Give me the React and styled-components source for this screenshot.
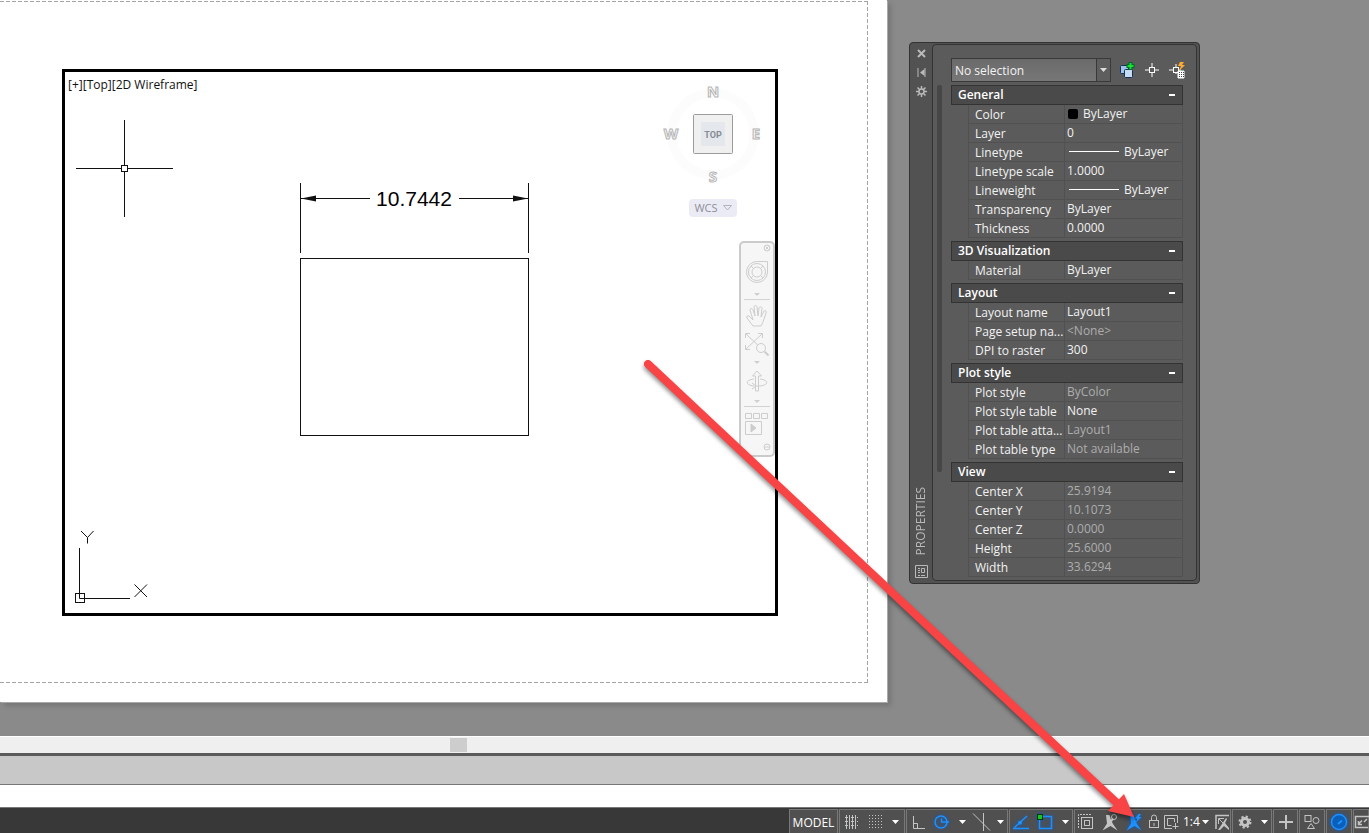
import React, { useState } from 'react';
import styled, { createGlobalStyle } from 'styled-components';

const GlobalStyle = createGlobalStyle`
  * {
    box-sizing: border-box;
  }
  body {
    margin: 0;
    background: #8a8a8a;
    font-family: "Open Sans", "Noto Sans", sans-serif;
    font-size: 12px;
  }
  button, select {
    font: inherit;
    color: inherit;
    margin: 0;
    padding: 0;
    border: none;
    background: none;
    appearance: none;
  }
  svg {
    display: block;
    flex: none;
  }
`;

const Page = styled.div`
  position: relative;
  display: flex;
  flex-direction: column;
  min-height: 100vh;
  overflow: hidden;
`;

/* ---------- workspace ---------- */

const Workspace = styled.main`
  flex: 1;
  display: grid;
  grid-template-columns: 1fr 482px;
  padding-bottom: 34px;
  background: #8a8a8a;
`;

const Sheet = styled.section`
  display: flex;
  padding: 1px 19px 19px 0;
  background: #fff;
  box-shadow: 1px 1px 0 #a8a8a8, 4px 4px 5px rgba(0, 0, 0, 0.15);
`;

const PrintArea = styled.div`
  flex: 1;
  display: flex;
  padding: 68px 90px 67px 62px;
  background:
    repeating-linear-gradient(90deg, #a4a4a4 0 4px, transparent 4px 6px) top / 100% 1px no-repeat,
    repeating-linear-gradient(90deg, #a4a4a4 0 4px, transparent 4px 6px) bottom / 100% 1px no-repeat,
    repeating-linear-gradient(180deg, #a4a4a4 0 4px, transparent 4px 6px) right / 1px 100% no-repeat;
`;

const Viewport = styled.div`
  position: relative;
  flex: 1;
  display: grid;
  grid-template-columns: 1fr 124px;
  border: 3px solid #000;
`;

const Drawing = styled.svg`
  position: absolute;
  top: 0;
  left: 0;
  width: 100%;
  height: 100%;
`;

const ViewportControls = styled.div`
  position: relative;
  display: flex;
  align-items: flex-start;
  padding: 5px 3px;
  line-height: 16px;
  color: #111;
`;

const ViewTools = styled.div`
  position: relative;
  display: flex;
  flex-direction: column;
  align-items: center;
  padding-top: 5px;
`;

const WcsButton = styled.button`
  display: flex;
  align-items: center;
  justify-content: center;
  gap: 5px;
  width: 48px;
  height: 18px;
  margin-top: 12px;
  padding-bottom: 1px;
  border-radius: 4px;
  background: #ebebf5;
  color: #8e8e96;
  font-size: 11px;
`;

const NavBar = styled.nav`
  align-self: flex-end;
  display: flex;
  flex-direction: column;
  width: 36px;
  height: 216px;
  margin-top: 24px;
  border: 2px solid #cbcbcb;
  border-radius: 5px;
  background: #f6f6f6;
  color: #cdcdcd;
`;

const NavButton = styled.button`
  display: flex;
  align-items: center;
  justify-content: center;
  height: ${(p) => p.$height}px;
`;

const NavRule = styled.hr`
  width: 26px;
  height: 1px;
  margin: 0 auto;
  border: none;
  background: #d2d2d2;
`;

/* ---------- properties palette ---------- */

const Palette = styled.aside`
  display: flex;
  width: 291px;
  height: 542px;
  margin: 42px 0 0 22px;
  padding: 1px 2px 2px 1px;
  border: 1px solid #333;
  border-radius: 4px;
  background: #525252;
`;

const PaletteStrip = styled.div`
  flex: none;
  display: flex;
  flex-direction: column;
  align-items: flex-start;
  width: 21px;
  color: #b9b9b9;
`;

const StripButton = styled.button`
  display: flex;
  align-items: center;
  justify-content: center;
  width: 20px;
  height: 19px;
`;

const PaletteTitle = styled.h2`
  width: 20px;
  margin: auto 0 7px;
  font-size: 12px;
  font-weight: 400;
  line-height: 20px;
  writing-mode: vertical-rl;
  transform: rotate(180deg);
`;

const PaletteBody = styled.div`
  flex: 1;
  min-width: 0;
  display: flex;
  align-items: flex-start;
  gap: 9px;
  padding: 13px 13px 0 4px;
  border: 1px solid #333;
  border-radius: 4px;
  background: #5b5b5b;
  color: #f2f2f2;
`;

const ScrollThumb = styled.div`
  flex: none;
  width: 5px;
  height: 387px;
  margin-top: 27px;
  border-radius: 2px;
  background: #464646;
`;

const PaletteContent = styled.div`
  flex: 1;
  min-width: 0;
`;

const SelectionRow = styled.div`
  display: flex;
  align-items: center;
  height: 24px;
  margin-bottom: 3px;
`;

const SelectionBox = styled.label`
  flex: none;
  display: flex;
  align-items: center;
  width: 160px;
  height: 24px;
  margin-right: 3px;
  border: 1px solid #393939;
  background: linear-gradient(#6a6a6a, #777);
`;

const SelectionSelect = styled.select`
  flex: 1;
  height: 22px;
  padding: 0 3px;
  border-right: 1px solid #393939;
`;

const SelectionCaret = styled.span`
  display: flex;
  align-items: center;
  justify-content: center;
  width: 13px;
  height: 22px;
  background: #5e5e5e;
`;

const PickButton = styled.button`
  flex: none;
  display: flex;
  align-items: center;
  justify-content: center;
  width: 25px;
  height: 22px;
`;

const Section = styled.section`
  margin-bottom: 3px;
`;

const SectionHeader = styled.button`
  display: flex;
  align-items: center;
  justify-content: space-between;
  width: 100%;
  height: 20px;
  padding: 0 7px 1px 6px;
  border: 1px solid #333;
  background: #4a4a4a;
  color: #fff;
  font-weight: 600;
`;

const Minus = styled.span`
  width: 6px;
  height: 2px;
  background: #fff;
`;

const PropertyTable = styled.table`
  width: calc(100% - 17px);
  margin-left: 17px;
  border-collapse: separate;
  border-spacing: 0;
  table-layout: fixed;
`;

const NameCell = styled.th`
  width: 96px;
  height: 19px;
  padding: 1px 0 0 6px;
  border-left: 1px solid #515151;
  border-bottom: 1px solid #515151;
  font-weight: 400;
  line-height: 17px;
  text-align: left;
  white-space: nowrap;
`;

const ValueCell = styled.td`
  height: 19px;
  padding: 0 0 1px 2px;
  border-left: 1px solid #515151;
  border-right: 1px solid #515151;
  border-bottom: 1px solid #515151;
  color: ${(p) => (p.$muted ? '#adadad' : '#f2f2f2')};
  line-height: 17px;
  white-space: nowrap;
`;

const ValueContent = styled.span`
  display: flex;
  align-items: center;
  gap: 5px;
`;

const Swatch = styled.span`
  width: 10px;
  height: 10px;
  margin-left: 1px;
  border-radius: 2px;
  background: #000;
`;

const LineSample = styled.span`
  width: 50px;
  height: 1px;
  margin-left: 2px;
  background: #fff;
`;

/* ---------- bottom bars ---------- */

const ScrollTrack = styled.div`
  height: 17px;
  padding: 1px 0 1px 450px;
  border-top: 1px solid #fff;
  background: #efefef;
`;

const TrackThumb = styled.div`
  width: 17px;
  height: 14px;
  background: #cdcdcd;
`;

const CommandHistory = styled.div`
  height: 32px;
  border-top: 3px solid #5a5a5a;
  border-bottom: 1px solid #777;
  background: #c8c8c8;
`;

const CommandLine = styled.div`
  height: 22px;
  background: #fff;
`;

const StatusBar = styled.footer`
  display: flex;
  justify-content: flex-end;
  gap: 1px;
  height: 26px;
  padding-top: 1px;
  border-top: 1px solid #777;
  background: #383838;
  overflow: hidden;
`;

const StatusGroup = styled.div`
  display: flex;
  border: 1px solid #787878;
  border-width: 1px 1px 0;
  background: #505050;
  color: #c4c4c4;
  box-shadow: 1px 0 0 #505050;
`;

const StatusButton = styled.button`
  display: flex;
  align-items: center;
  justify-content: center;
  width: ${(p) => p.$width}px;
  height: 24px;
  color: ${(p) => (p.$on ? '#1e90ff' : 'inherit')};
  filter: ${(p) => (p.$on ? 'drop-shadow(0 0 2px #0a5cc0)' : 'none')};
`;

const ModelButton = styled(StatusButton)`
  color: #fff;
`;

const ScaleLabel = styled.label`
  display: flex;
  align-items: center;
  width: 33px;
  padding-left: 3px;
  color: #fff;
`;

const ScaleSelect = styled.select`
  width: 19px;
  height: 24px;
`;

const PointerOverlay = styled.svg`
  position: absolute;
  top: 0;
  left: 0;
  width: 100%;
  height: 100%;
  pointer-events: none;
  filter: drop-shadow(0 3px 2px rgba(0, 0, 0, 0.45));
`;

/* ---------- icons ---------- */

const Icon = ({ size = 18, w, h, children }) => (
  <svg
    width={w || size}
    height={h || size}
    viewBox={`0 0 ${w || size} ${h || size}`}
    fill="none"
    stroke="currentColor"
    aria-hidden="true"
  >
    {children}
  </svg>
);

const Caret = ({ color = '#fff' }) => (
  <Icon w={7} h={4}>
    <path d="M0 0h7L3.500 4z" fill={color} stroke="none" />
  </Icon>
);

const GridIcon = () => (
  <Icon size={16}>
    <path d="M2.500 1v14M5.500 1v14M8.500 1v14M11.500 1v14" />
    <path d="M1 3.500h14M1 7.500h14M1 11.500h14" strokeDasharray="1 1" />
  </Icon>
);

const DotsIcon = () => (
  <Icon size={16}>
    <path
      d="M2 1.500h13M2 4.500h13M2 7.500h13M2 10.500h13M2 13.500h13"
      strokeDasharray="1 2"
    />
  </Icon>
);

const OrthoIcon = () => (
  <Icon size={16}>
    <path d="M3.500 2v12.500H15M3.500 9.500h4v5" />
  </Icon>
);

const PolarIcon = () => (
  <Icon>
    <circle cx="9" cy="9" r="6" strokeWidth="1.500" />
    <path d="M9 9h8M9.500 9V5.500" strokeWidth="1.500" />
  </Icon>
);

const IsoIcon = () => (
  <Icon w={20} h={20}>
    <path d="M1 1.500l17 17M11.500 1v18" />
  </Icon>
);

const TrackIcon = () => (
  <Icon>
    <path d="M1 15.500h16M2.500 14.500L15 3" strokeWidth="1.500" />
    <circle cx="8" cy="9.800" r="2" fill="currentColor" stroke="none" />
  </Icon>
);

const OsnapIcon = () => (
  <Icon>
    <rect x="3.500" y="3.500" width="12" height="12" strokeWidth="1.500" />
    <rect x="1.500" y="1.500" width="5" height="5" fill="#12c81e" stroke="#031" />
  </Icon>
);

const CyclingIcon = () => (
  <Icon>
    <path d="M1.500 15V1.500H15" strokeDasharray="2 1" />
    <rect x="4.500" y="4.500" width="11" height="11" />
    <rect x="7.500" y="7.500" width="5" height="5" />
  </Icon>
);

const annotationShape = 'M5 2h3.500l1.500 5 2 4 4.500 6.500-7-4.500-8 4.500 4.500-7z';

const AnnotationIcon = () => (
  <Icon>
    <path d={annotationShape} fill="currentColor" stroke="none" />
    <path d="M9 9l3-3" strokeWidth="2" />
    <circle cx="13" cy="4" r="2.500" />
  </Icon>
);

const AutoScaleIcon = () => (
  <Icon>
    <path d={annotationShape} fill="currentColor" stroke="none" />
    <path d="M8 10l3-2" strokeWidth="2.500" />
    <path d="M13.500 1L10 5.500h2.500L11 9.500l5.500-5.500h-2.500l2-3z" fill="currentColor" stroke="none" />
  </Icon>
);

const LockIcon = () => (
  <Icon w={12} h={16}>
    <rect x="1.500" y="6.500" width="9" height="7" />
    <path d="M3.500 6V3.500a2 2 0 0 1 5 0V6M6 9v3" />
  </Icon>
);

const MaximizeIcon = () => (
  <Icon size={16}>
    <path d="M9 14.500H1.500v-13h13V9" />
    <path d="M8.500 11.500h-4v-7h7V8M12.500 9v6M9.500 12.500h6" />
  </Icon>
);

const AnnotationMonitorIcon = () => (
  <Icon size={16}>
    <path d="M2 15V1.500h13" strokeWidth="1.500" />
    <path d="M4.500 10V4.500H10M5 5l4 4" />
    <path d="M12 4l1 1-2 4 4 5v2l-5-4-4 4H4l4-6z" fill="currentColor" stroke="none" />
  </Icon>
);

const GearIcon = () => (
  <Icon size={14}>
    <circle cx="7" cy="7" r="3.500" strokeWidth="3" />
    <circle cx="7" cy="7" r="5.500" strokeWidth="2" strokeDasharray="2.200 2.120" />
  </Icon>
);

const PlusIcon = () => (
  <Icon size={16}>
    <path d="M8 1v14M1 8h14" strokeWidth="2" />
  </Icon>
);

const IsolateIcon = () => (
  <Icon size={16}>
    <rect x="1" y="1.500" width="6" height="6" />
    <circle cx="12" cy="6.500" r="3" />
    <path d="M7 9.500l3.500 5h-7z" />
  </Icon>
);

const HardwareIcon = () => (
  <Icon>
    <circle cx="9" cy="9" r="7.500" fill="#0a5fb8" strokeWidth="1.500" />
    <path d="M8 11l4-3.500" strokeWidth="2" />
  </Icon>
);

const CleanScreenIcon = () => (
  <Icon size={16}>
    <path d="M15 13.500H2.500v-11H16" strokeWidth="1.500" />
    <path d="M9 6.500L5.500 10M5.500 7v3.500H9M11 8l3-3" strokeWidth="1.500" />
  </Icon>
);

const CloseIcon = () => (
  <Icon size={9}>
    <path d="M1 1l7 7M8 1L1 8" strokeWidth="2" />
  </Icon>
);

const PinIcon = () => (
  <Icon size={9}>
    <path d="M1 0v9M8 0v9" />
    <path d="M7.500 1v7L3 4.500z" fill="currentColor" stroke="none" />
  </Icon>
);

const StripGearIcon = () => (
  <Icon size={11}>
    <circle cx="5.500" cy="5.500" r="2.500" strokeWidth="1.500" />
    <path d="M5.500 0v3M5.500 8v3M0 5.500h3M8 5.500h3M1.500 1.500l2 2M7.500 7.500l2 2M9.500 1.500l-2 2M3.500 7.500l-2 2" strokeWidth="1.500" />
  </Icon>
);

const PaletteMenuIcon = () => (
  <Icon size={13}>
    <path d="M.5.5h12v12H.5zM3 3.500h2M3 5.500h2M3 7.500h2M3 10.500h2M6.500 3.500h3v4h-3zM6 10.500h4" />
  </Icon>
);

const PickAddIcon = () => (
  <Icon size={18}>
    <rect x="2.500" y="4.500" width="8" height="8" rx="1" fill="#9fc1ea" stroke="#17304f" />
    <rect x="6.500" y="8.500" width="8" height="8" rx="1" fill="#c6dcf5" stroke="#17304f" />
    <path d="M12.500 1v8M8.500 5h8" stroke="#063" strokeWidth="4" />
    <path d="M12.500 2v6M9.500 5h6" stroke="#18e02c" strokeWidth="2" />
  </Icon>
);

const SelectObjectsIcon = () => (
  <Icon size={14}>
    <path d="M7 0v5M7 9v5M0 7h5M9 7h5" stroke="#fff" />
    <rect x="4.500" y="4.500" width="5" height="5" stroke="#fff" />
  </Icon>
);

const QuickSelectIcon = () => (
  <Icon size={18}>
    <path d="M8 3v4M8 11v2M1 9h5M10 9h3" stroke="#fff" />
    <rect x="5.500" y="6.500" width="5" height="5" stroke="#fff" />
    <path d="M12 1h4l-2 3h3l-6 6 2-5h-3z" fill="#ffab2e" stroke="none" />
    <path d="M10 10h6v7h-6z" fill="#fff" stroke="#fff" />
    <path d="M11 11.500h5M11 13.500h5M11 15.500h5" stroke="#444" strokeDasharray="1 1" />
  </Icon>
);

/* ---------- viewport drawing ---------- */

const SheetDrawing = () => (
  <Drawing viewBox="65 72 710 541" preserveAspectRatio="xMinYMin meet" stroke="#111" fill="none">
    {/* cursor */}
    <path d="M124.500 120v45M124.500 172v45M76 168.500h45M128 168.500h45" />
    <rect x="121.500" y="165.500" width="6" height="6" />
    {/* dimension */}
    <path d="M300.500 183v70M528.500 183v70M301 198.500h69M459 198.500h69" />
    <path d="M301 198.500l15-3v6zM528 198.500l-15-3v6z" fill="#111" stroke="none" />
    <text
      x="414"
      y="206"
      textAnchor="middle"
      fontFamily="Liberation Sans, Arial, sans-serif"
      fontSize="21"
      fill="#000"
      stroke="none"
    >
      10.7442
    </text>
    <rect x="300.500" y="258.500" width="228" height="177" />
    {/* ucs */}
    <path d="M79.500 548v50.500H130" />
    <rect x="75.500" y="593.500" width="9" height="9" />
    <path d="M81 531l6.500 6.500 6-6.500M87.500 537.500v6M134.500 584.500l12.500 12.500M147 584.500L134.500 597" />
  </Drawing>
);

const ViewCube = () => (
  <svg width="104" height="110" viewBox="0 -6 104 110">
    <circle cx="52" cy="51" r="41" fill="none" stroke="#fcfcfc" strokeWidth="9" />
    <g
      fill="#fafafa"
      stroke="#b4b4b4"
      fontFamily="Open Sans, sans-serif"
      fontWeight="700"
      fontSize="15"
      textAnchor="middle"
    >
      <text x="52" y="14">N</text>
      <text x="52" y="99">S</text>
      <text x="10" y="56">W</text>
      <text x="95" y="56">E</text>
    </g>
    <rect x="32.500" y="31.500" width="39" height="39" rx="1" fill="#f0f0f0" stroke="#9c9c9c" />
    <rect x="40" y="39" width="24" height="24" fill="#e4e8ec" />
    <text
      x="52"
      y="55"
      textAnchor="middle"
      fontFamily="Roboto, sans-serif"
      fontWeight="700"
      fontSize="9"
      fill="#868b95"
    >
      TOP
    </text>
  </svg>
);

const NavCaret = () => (
  <NavButton $height={9} aria-label="More options">
    <Icon w={6} h={3}>
      <path d="M0 0h6L3 3z" fill="#cfcfcf" stroke="none" />
    </Icon>
  </NavButton>
);

const NavigationBar = () => (
  <NavBar>
    <NavButton $height={10} aria-label="Close">
      <Icon w={28} h={8}>
        <circle cx="24" cy="4" r="3" />
        <path d="M22.500 2.500l3 3M25.500 2.500l-3 3" />
      </Icon>
    </NavButton>
    <NavButton $height={37} aria-label="Full Navigation Wheel">
      <Icon size={24}>
        <path d="M12 1.500h10.500V12a10.500 10.500 0 1 1-10.500-10.500z" />
        <circle cx="12" cy="12" r="8.500" />
        <circle cx="12" cy="12" r="5" />
        <path d="M6 6l2.500 2.500M18 6l-2.500 2.500M6 18l2.500-2.500M18 18l-2.500-2.500" />
      </Icon>
    </NavButton>
    <NavCaret />
    <NavRule />
    <NavButton $height={31} aria-label="Pan">
      <Icon w={24} h={24}>
        <path d="M8 22l-6-8c-1-2 1-3 2-2l4 4L5 6c0-2 2-2 3 0l2 6-1-9c0-2 3-2 3 0l1 9 1-8c1-2 3-1 3 0l-1 9 3-6c1-1 3 0 2 2l-3 9-2 4z" />
      </Icon>
    </NavButton>
    <NavButton $height={27} aria-label="Zoom Extents">
      <Icon w={26} h={26}>
        <path d="M1.500 6V1.500H6M2 2l15 14M14 1.500h4.500V6M18 2L2 17M1.500 13v4.500H6" />
        <circle cx="17" cy="16" r="4.500" fill="#f6f6f6" />
        <path d="M20.500 19.500l4 4" strokeWidth="2" />
      </Icon>
    </NavButton>
    <NavCaret />
    <NavButton $height={30} aria-label="Orbit">
      <Icon size={24}>
        <path d="M10.500 21V6H7.500L12 1l4.500 5h-3v15zM9 9c-9 1-9 6 0 7M15 9c9 1 9 6 0 7h-4M7 13l4 3-4 3" />
      </Icon>
    </NavButton>
    <NavCaret />
    <NavRule />
    <NavButton $height={33} aria-label="ShowMotion">
      <Icon w={24} h={24}>
        <path d="M.5 1.500h6v5h-6zM8.500 1.500h6v5h-6zM16.500 1.500h6v5h-6zM.5 9.500h16v13H.5z" />
        <path d="M6 12v8l5-4z" fill="currentColor" />
      </Icon>
    </NavButton>
    <NavButton $height={14} aria-label="Customize">
      <Icon w={28} h={8}>
        <circle cx="24" cy="4" r="3" />
        <path d="M22 4h4" />
      </Icon>
    </NavButton>
  </NavBar>
);

/* ---------- data ---------- */

const sections = [
  {
    title: 'General',
    rows: [
      { name: 'Color', value: 'ByLayer', sample: 'swatch' },
      { name: 'Layer', value: '0' },
      { name: 'Linetype', value: 'ByLayer', sample: 'line' },
      { name: 'Linetype scale', value: '1.0000' },
      { name: 'Lineweight', value: 'ByLayer', sample: 'line' },
      { name: 'Transparency', value: 'ByLayer' },
      { name: 'Thickness', value: '0.0000' },
    ],
  },
  {
    title: '3D Visualization',
    rows: [{ name: 'Material', value: 'ByLayer' }],
  },
  {
    title: 'Layout',
    rows: [
      { name: 'Layout name', value: 'Layout1' },
      { name: 'Page setup na...', value: '<None>', muted: true },
      { name: 'DPI to raster', value: '300' },
    ],
  },
  {
    title: 'Plot style',
    rows: [
      { name: 'Plot style', value: 'ByColor', muted: true },
      { name: 'Plot style table', value: 'None' },
      { name: 'Plot table atta...', value: 'Layout1', muted: true },
      { name: 'Plot table type', value: 'Not available', muted: true },
    ],
  },
  {
    title: 'View',
    rows: [
      { name: 'Center X', value: '25.9194', muted: true },
      { name: 'Center Y', value: '10.1073', muted: true },
      { name: 'Center Z', value: '0.0000', muted: true },
      { name: 'Height', value: '25.6000', muted: true },
      { name: 'Width', value: '33.6294', muted: true },
    ],
  },
];

const statusGroups = [
  [
    { label: 'Grid', icon: <GridIcon />, width: 24 },
    { label: 'Snap', icon: <DotsIcon />, width: 22 },
    { label: 'Snap settings', icon: <Caret />, width: 18 },
  ],
  [
    { label: 'Ortho', icon: <OrthoIcon />, width: 22 },
    { label: 'Polar tracking', icon: <PolarIcon />, width: 24, on: true },
    { label: 'Polar settings', icon: <Caret />, width: 18 },
    { label: 'Isometric drafting', icon: <IsoIcon />, width: 22 },
    { label: 'Isoplane settings', icon: <Caret />, width: 14 },
  ],
  [
    { label: 'Object snap tracking', icon: <TrackIcon />, width: 22, on: true },
    { label: 'Object snap', icon: <OsnapIcon />, width: 26, on: true },
    { label: 'Object snap settings', icon: <Caret />, width: 14 },
  ],
  [
    { label: 'Selection cycling', icon: <CyclingIcon />, width: 22 },
    { label: 'Annotation visibility', icon: <AnnotationIcon />, width: 26 },
    { label: 'AutoScale', icon: <AutoScaleIcon />, width: 22, on: true },
    { label: 'Lock viewport', icon: <LockIcon />, width: 17 },
    { label: 'Maximize viewport', icon: <MaximizeIcon />, width: 18 },
    { label: 'Viewport scale', scale: true },
    { label: 'Annotation monitor', icon: <AnnotationMonitorIcon />, width: 17 },
  ],
  [
    { label: 'Workspace switching', icon: <GearIcon />, width: 24 },
    { label: 'Workspace list', icon: <Caret />, width: 14 },
  ],
  [{ label: 'Add', icon: <PlusIcon />, width: 23 }],
  [{ label: 'Isolate objects', icon: <IsolateIcon />, width: 24 }],
  [{ label: 'Graphics performance', icon: <HardwareIcon />, width: 24, on: true }],
  [{ label: 'Clean screen', icon: <CleanScreenIcon />, width: 14 }],
];

const PropertySection = ({ title, rows }) => {
  const [open, setOpen] = useState(true);

  return (
    <Section>
      <SectionHeader onClick={() => setOpen(!open)} aria-expanded={open}>
        {title}
        <Minus />
      </SectionHeader>
      {open && (
        <PropertyTable>
          <tbody>
            {rows.map((row) => (
              <tr key={row.name}>
                <NameCell scope="row">{row.name}</NameCell>
                <ValueCell $muted={row.muted}>
                  <ValueContent>
                    {row.sample === 'swatch' && <Swatch />}
                    {row.sample === 'line' && <LineSample />}
                    {row.value}
                  </ValueContent>
                </ValueCell>
              </tr>
            ))}
          </tbody>
        </PropertyTable>
      )}
    </Section>
  );
};

const PropertiesPalette = () => (
  <Palette>
    <PaletteStrip>
      <StripButton aria-label="Close"><CloseIcon /></StripButton>
      <StripButton aria-label="Auto-hide"><PinIcon /></StripButton>
      <StripButton aria-label="Settings"><StripGearIcon /></StripButton>
      <PaletteTitle>PROPERTIES</PaletteTitle>
      <StripButton aria-label="Palette menu"><PaletteMenuIcon /></StripButton>
    </PaletteStrip>
    <PaletteBody>
      <ScrollThumb />
      <PaletteContent>
        <SelectionRow>
          <SelectionBox>
            <SelectionSelect aria-label="Selection">
              <option>No selection</option>
            </SelectionSelect>
            <SelectionCaret><Caret color="#ddd" /></SelectionCaret>
          </SelectionBox>
          <PickButton aria-label="Toggle PICKADD"><PickAddIcon /></PickButton>
          <PickButton aria-label="Select objects"><SelectObjectsIcon /></PickButton>
          <PickButton aria-label="Quick select"><QuickSelectIcon /></PickButton>
        </SelectionRow>
        {sections.map((section) => (
          <PropertySection key={section.title} title={section.title} rows={section.rows} />
        ))}
      </PaletteContent>
    </PaletteBody>
  </Palette>
);

const StatusItem = ({ item }) => {
  if (item.scale) {
    return (
      <ScaleLabel>
        <ScaleSelect aria-label={item.label}>
          <option>1:4</option>
        </ScaleSelect>
        <Caret />
      </ScaleLabel>
    );
  }
  return (
    <StatusButton $width={item.width} $on={item.on} aria-label={item.label}>
      {item.icon}
    </StatusButton>
  );
};

const App = () => {
  return (
    <>
      <GlobalStyle />
      <Page>
        <Workspace>
          <Sheet>
            <PrintArea>
              <Viewport>
                <SheetDrawing />
                <ViewportControls>
                  <button>[+]</button>
                  <button>[Top]</button>
                  <button>[2D Wireframe]</button>
                </ViewportControls>
                <ViewTools>
                  <ViewCube />
                  <WcsButton>
                    WCS
                    <Icon w={9} h={6}>
                      <path d="M.5.5h8l-4 4.500z" stroke="#b4b4c0" />
                    </Icon>
                  </WcsButton>
                  <NavigationBar />
                </ViewTools>
              </Viewport>
            </PrintArea>
          </Sheet>
          <PropertiesPalette />
        </Workspace>
        <ScrollTrack>
          <TrackThumb />
        </ScrollTrack>
        <CommandHistory />
        <CommandLine />
        <StatusBar>
          <StatusGroup>
            <ModelButton $width={47}>MODEL</ModelButton>
          </StatusGroup>
          {statusGroups.map((group) => (
            <StatusGroup key={group[0].label}>
              {group.map((item) => (
                <StatusItem key={item.label} item={item} />
              ))}
            </StatusGroup>
          ))}
        </StatusBar>
        <PointerOverlay>
          <path d="M648 364L1118 804" stroke="#f84444" strokeWidth="8" strokeLinecap="round" />
          <path d="M1134 817L1108 811L1124 794z" fill="#f84444" />
        </PointerOverlay>
      </Page>
    </>
  );
};

export default App;
